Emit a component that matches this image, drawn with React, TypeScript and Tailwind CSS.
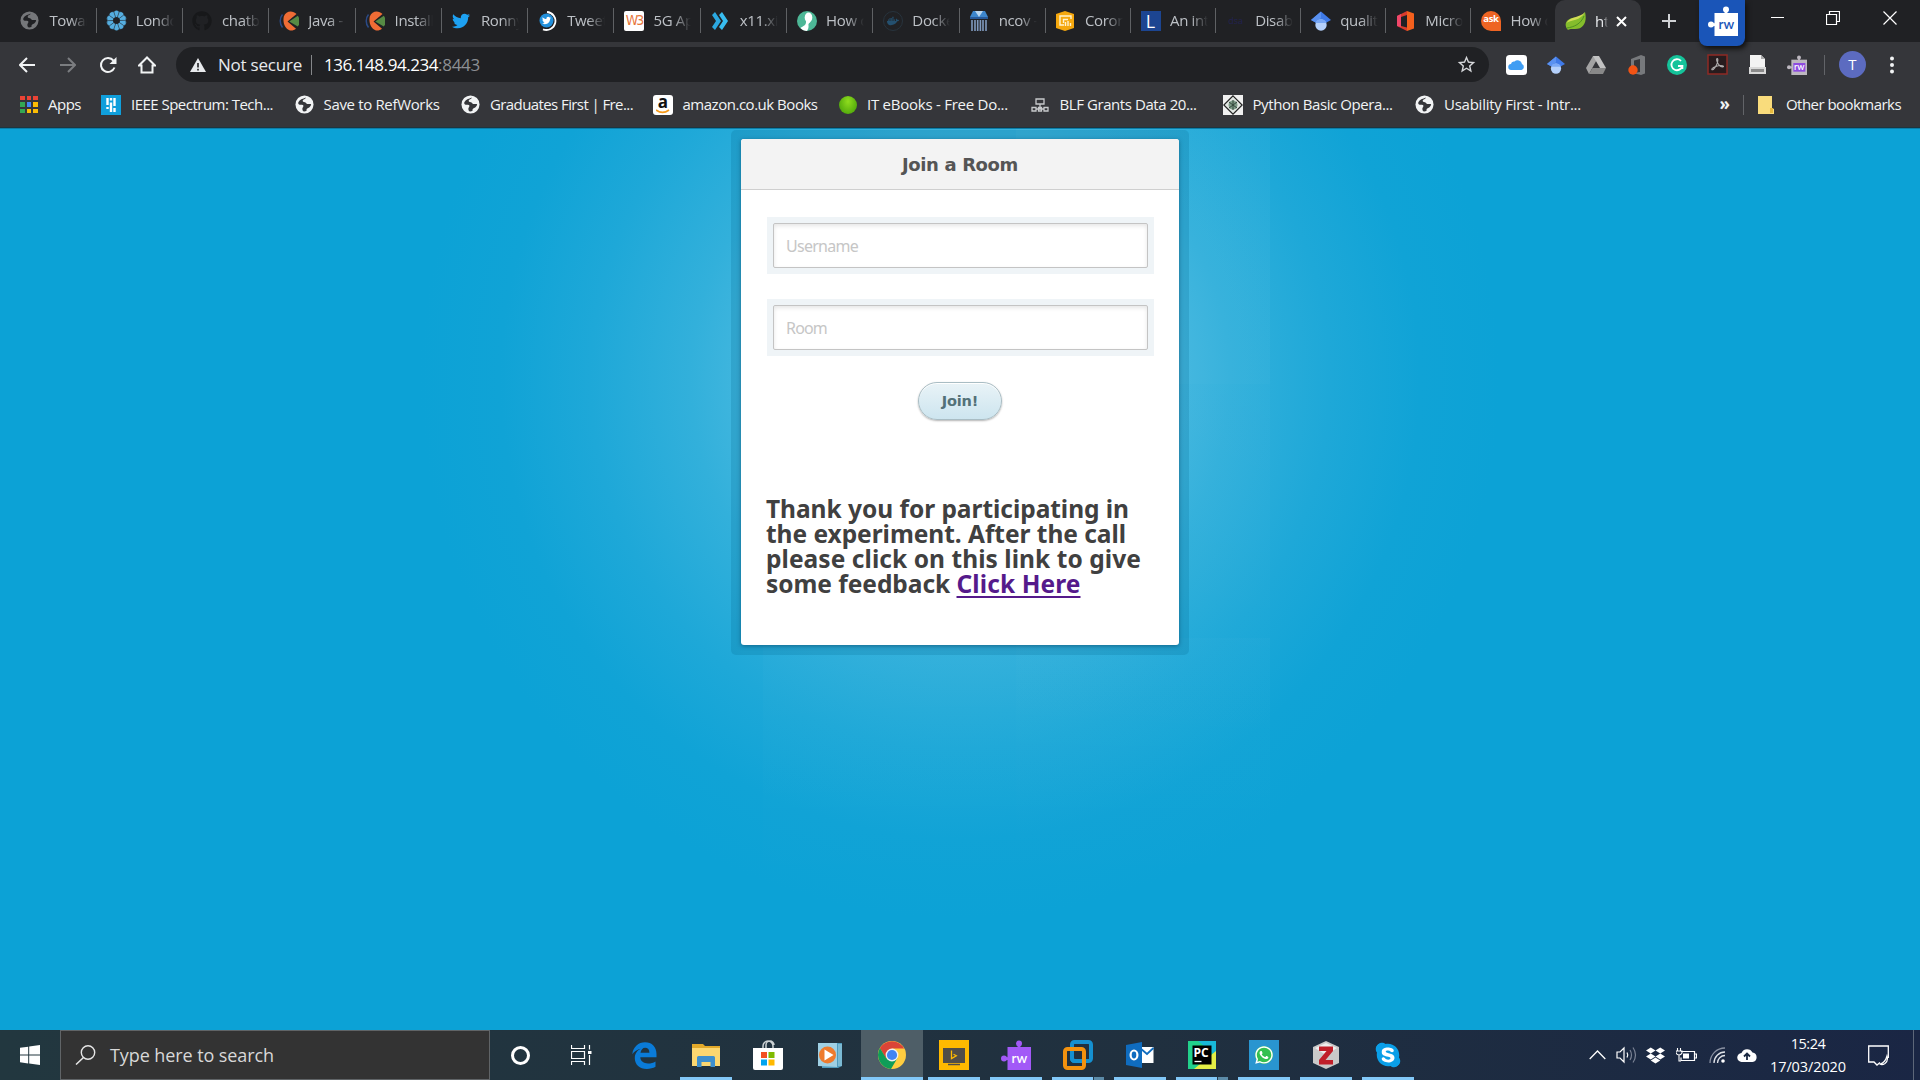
import { useLayoutEffect, useRef, useState } from "react";
import type { ReactNode } from "react";
import { FaTwitter, FaGithub, FaDocker, FaDropbox, FaWhatsapp, FaAmazon, FaSkype } from "react-icons/fa";
import { MdStarBorder } from "react-icons/md";

/* Text spaced so that it spans a given number of pixels. */
function Fit({ w, children, className = "" }: { w: number; children: string; className?: string }) {
  const ref = useRef<HTMLSpanElement>(null);
  const [gap, setGap] = useState(0);
  useLayoutEffect(() => {
    const natural = ref.current!.getBoundingClientRect().width;
    setGap((w - natural) / children.length);
  }, [w, children]);
  return (
    <span ref={ref} className={`inline-block shrink-0 whitespace-pre ${className}`} style={{ letterSpacing: gap }}>
      {children}
    </span>
  );
}

const Globe = ({ disc = "#f1f3f4", land = "#35363a" }: { disc?: string; land?: string }) => (
  <svg width="19" height="19" viewBox="0 0 20 20">
    <circle cx="10" cy="10" r="9.5" fill={disc} />
    <path d="M11.500 2.500C8 4 5 4.500 3.500 7.500 2.800 10 5 10.500 7 10.200c2-.2 2.300 1.500 1.300 2.600-1 1.200-.5 2.800.2 4.400 1.500.3 2.500 0 3.700-.6-.3-1.300.3-2.200 1.600-2.800 1.600-.8 3-2 3.200-4-1.200-.8-2-.3-3.300-.2-1.700 0-1.700-1.400-3.200-2-1.600-.5-2.600-.6-2.400-1.900.4-1.500 2.600-1 3.400-3.200z" fill={land} />
  </svg>
);

const Puzzle = ({ size, color, text, inner }: { size: number; color: string; text: string; inner?: string }) => (
  <svg width={size} height={size} viewBox="0 0 30 30">
    <circle cx="18" cy="3.600" r="3" fill={color} />
    <rect x="16.600" y="4" width="2.800" height="5" fill={color} />
    <circle cx="3" cy="18.500" r="3" fill={color} />
    <rect x="4" y="17.200" width="4" height="2.800" fill={color} />
    <rect x="6.500" y="7" width="23.500" height="23" fill={color} />
    {inner && <rect x="9.500" y="12" width="18" height="13" fill={inner} />}
    <text x="18.300" y="22.500" fontSize="13.500" fontWeight="600" textAnchor="middle" fill={text} fontFamily="Lato, sans-serif">rw</text>
  </svg>
);

const Scholar = ({ size = 20 }: { size?: number }) => (
  <svg width={size} height={size} viewBox="0 0 20 20">
    <path d="M10 .5L0 9l4.500 2.500h11L20 9z" fill="#3f7ae8" />
    <path d="M10 .5L0 9l4.500 2.500L10 7z" fill="#5a91f0" />
    <circle cx="10" cy="14" r="5.700" fill="#b4d0fb" />
    <path d="M4.500 12C6 7 14 7 15.500 12z" fill="#7aa8f5" />
  </svg>
);

const Cuneiform = () => (
  <svg width="20" height="20" viewBox="0 0 20 20">
    <path d="M3.500 3.500C.5 7 .5 13 3.500 16.500" fill="none" stroke="#2b4a86" strokeWidth="1.500" />
    <path d="M17.500 3C14-.8 7-.8 4.800 5.500 3.500 12 6 18 11 19.500c2.500.3 4.500-.5 6-1.800L8.500 10.500z" fill="#ef6c35" />
    <path d="M18.800 4.800a9.500 9.500 0 0 1 0 10.800L10.200 10.500z" fill="#568a44" />
  </svg>
);

type Tab = { title: string; icon: ReactNode };
const tabs: Tab[] = [
  { title: "Towards", icon: <Globe disc="#75777a" land="#202124" /> },
  {
    title: "London",
    icon: (
      <svg width="21" height="21" viewBox="0 0 20 20">
        {Array.from({ length: 10 }, (_, i) => (
          <path key={i} d="M9 7.200L7.200 1.800Q10-1.200 12.800 1.800L11 7.200z" fill="#55aee0" stroke="#202124" strokeWidth=".4" transform={`rotate(${i * 36} 10 10)`} />
        ))}
        <circle cx="10" cy="10" r="3.200" fill="#202124" />
      </svg>
    ),
  },
  { title: "chatbot", icon: <FaGithub size={20} color="#17181a" /> },
  { title: "Java - C", icon: <Cuneiform /> },
  { title: "Installing", icon: <Cuneiform /> },
  { title: "Ronny", icon: <FaTwitter size={18} color="#1da1f2" /> },
  {
    title: "Tweets",
    icon: (
      <span className="relative flex size-5 items-center justify-center">
        <svg width="20" height="20" viewBox="0 0 20 20" className="absolute inset-0">
          <path d="M9 1a9 9 0 1 1-4 17.300" fill="none" stroke="#fff" strokeWidth="1.800" />
          <circle cx="8.500" cy="9.500" r="7" fill="#2190dc" />
        </svg>
        <FaTwitter size={9} color="#fff" className="relative -left-[1.5px]" />
      </span>
    ),
  },
  {
    title: "5G App",
    icon: <span className="flex size-5 items-center justify-center rounded-[2px] bg-white font-['DejaVu_Sans_Condensed'] text-[14px] tracking-[-2px] text-[#e8773c]">W3</span>,
  },
  {
    title: "x11.xi",
    icon: (
      <svg width="18" height="18" viewBox="0 0 18 18">
        <path d="M1 3l3-3 6 9-6 9-3-3 4-6z" fill="#2ba8e0" />
        <path d="M8 3l3-3 6 9-6 9-3-3 4-6z" fill="#38bdf0" />
      </svg>
    ),
  },
  {
    title: "How can",
    icon: (
      <svg width="20" height="20" viewBox="0 0 20 20">
        <circle cx="10" cy="10" r="10" fill="#4db796" />
        <ellipse cx="11.500" cy="6.500" rx="3.800" ry="5" fill="#fff" />
        <path d="M9 10h4.500c0 2-2.500 2-2 4.500.3 2-.5 4-1.500 5.500-2.500 0-5-1.200-6.500-3C6 15 9.500 14.500 9 10z" fill="#fff" />
      </svg>
    ),
  },
  { title: "Docker", icon: <span className="flex size-5 items-center justify-center rounded-full border border-[#27333d]"><FaDocker size={12} color="#24506f" /></span> },
  {
    title: "ncov -",
    icon: (
      <svg width="18" height="20" viewBox="0 0 18 20">
        <path d="M3 0h12l3 6H0z" fill="#3d86cc" />
        <path d="M5 0l4 6 4-6z" fill="#b9d5ee" />
        <path d="M0 6h18v2H0z" fill="#285a9a" />
        <path d="M2 9v11M5 9v11M7.700 9v11M10.400 9v11M13 9v11M16 9v11" stroke="#7f99bd" strokeWidth="1.600" />
      </svg>
    ),
  },
  {
    title: "Corona",
    icon: (
      <svg width="20" height="20" viewBox="0 0 20 20">
        <path d="M1 3l9-3 9 3v14l-9 3-9-3z" fill="#f5a80e" />
        <path d="M16 8V5H5v9h4M8.500 12V8.500H13M10.500 11v4M13 10v5M15.500 12v3" fill="none" stroke="#fff3d0" strokeWidth="1.400" />
      </svg>
    ),
  },
  { title: "An intro", icon: <span className="flex size-5 items-center justify-center bg-[#1c4591] font-['Open_Sans'] text-[18px] leading-none text-white">L</span> },
  { title: "Disabil", icon: <span className="flex size-5 items-center justify-center text-[9px] text-[#222250]">dsa</span> },
  { title: "quality", icon: <Scholar size={20} /> },
  {
    title: "Microso",
    icon: (
      <svg width="17" height="20" viewBox="0 0 17 20">
        <path d="M0 5l10-5v4L4 6v9l6 1.500V20L0 15z" fill="#d83b2c" />
        <path d="M0 5l4-2v13l-4-1z" fill="#f0476a" />
        <path d="M10 0l7 2.500v15L10 20z" fill="#f4601d" />
      </svg>
    ),
  },
  {
    title: "How do",
    icon: (
      <span className="flex size-5 items-center justify-center rounded-full rounded-br-[3px] bg-[#ee6423] pb-[2px] font-['Open_Sans'] text-[9.5px] font-bold tracking-[-0.3px] text-white">ask</span>
    ),
  },
];

function TabStrip() {
  return (
    <div className="flex h-[42px] bg-[#202124]">
      <div className="flex w-[1555px] pl-[10.4px]">
        {tabs.map((t, i) => (
          <div key={i} className={`flex h-[41px] shrink-0 items-center ${i < 12 ? "w-[86.3px]" : "w-[85.1px]"}`}>
            <div className="flex w-[39px] shrink-0 justify-center">{t.icon}</div>
            <div className="w-[38px] overflow-hidden mask-r-from-55% mask-r-to-100% text-[15px] tracking-[-0.35px] whitespace-pre text-[#bdc1c6]">{t.title}</div>
            <div className={i === tabs.length - 1 ? "hidden" : "ml-auto h-[25px] w-px bg-[#5f6164]"} />
          </div>
        ))}
      </div>
      <div className="flex w-[86px] items-center rounded-t-[10px] bg-[#35363a] pl-[10px]">
        <svg width="21" height="20" viewBox="0 0 21 20">
          <path d="M20 1c2 8 0 17-10 17-3 0-5-.5-7 1C-1 15 0 9 7 7c5-1 10-1 13-6z" fill="#84bd2c" />
          <path d="M20 1C15 7 5 5 1.500 12 5 9 16 10 20 1z" fill="#d2dd55" />
          <path d="M2 17c7-1 14-4 17-12" stroke="#4e9121" fill="none" />
        </svg>
        <div className="ml-[9px] w-[13px] overflow-hidden mask-r-from-60% mask-r-to-100% text-[15px] tracking-[-0.3px] text-[#e8eaed]">http</div>
        <svg width="11" height="11" viewBox="0 0 11 11" className="ml-[8px]"><path d="M1 1l9 9M10 1l-9 9" stroke="#fff" strokeWidth="2" /></svg>
      </div>
      <div className="flex w-[58px] items-center justify-center pr-[3px]">
        <svg width="16" height="16" viewBox="0 0 16 16"><path d="M8 1v14M1 8h14" stroke="#d0d2d5" strokeWidth="2" /></svg>
      </div>
      <div className="relative z-10 flex h-[46px] w-[46px] items-center justify-center rounded-b-[8px] bg-[#1a55b8] shadow-[2px_3px_5px_#111]">
        <div className="relative -top-[2px] left-[1px]"><Puzzle size={30} color="#fff" text="#1a55b8" /></div>
      </div>
      <div className="flex h-[36px] flex-1 items-center pl-[26px] text-white">
        <svg width="13" height="14" viewBox="0 0 13 14"><path d="M0 6.500h13" stroke="#fff" /></svg>
        <svg width="14" height="14" viewBox="0 0 14 14" className="ml-[42px]"><path d="M.5 3.500h10v10H.5zM3.500 3.500v-3h10v10h-3" fill="none" stroke="#fff" strokeWidth="1.200" /></svg>
        <svg width="14" height="14" viewBox="0 0 14 14" className="ml-[43px]"><path d="M.5.5l13 13M13.500.5l-13 13" stroke="#fff" strokeWidth="1.200" /></svg>
      </div>
    </div>
  );
}

function Toolbar() {
  const ext: ReactNode[] = [
    <svg width="21" height="20" viewBox="0 0 21 20"><rect width="21" height="20" rx="3.500" fill="#fff" /><path d="M5.500 15a3 3 0 0 1-.5-6 3 3 0 0 1 3.500-2.500A4.500 4.500 0 0 1 16 9a3.200 3.200 0 0 1-.5 6z" fill="#3f9df3" /></svg>,
    <Scholar size={18} />,
    <svg width="20" height="18" viewBox="0 0 20 18"><path d="M7 0h6l-4 7-6 11-3-6z" fill="#a3a3a3" /><path d="M7 0h6l7 12h-6z" fill="#c2c2c2" /><path d="M6.500 12H20l-3 6H3z" fill="#888" /></svg>,
    <svg width="18" height="20" viewBox="0 0 18 20"><path d="M3 4l10-4 4 1.500v17L13 20 5 18l7-1V4L6 5.500V15l-3 1z" fill="#77797c" /><circle cx="5" cy="15" r="4.700" fill="#f25314" /></svg>,
    <svg width="20" height="20" viewBox="0 0 20 20"><circle cx="10" cy="10" r="10" fill="#15c39a" /><path d="M14 6a5.500 5.500 0 1 0 1.300 5H11M15.400 11v3" fill="none" stroke="#fff" strokeWidth="1.800" /></svg>,
    <svg width="21" height="21" viewBox="0 0 21 21"><rect x="1" y="1" width="19" height="19" fill="#271c1e" stroke="#8e2a25" strokeWidth="1.500" /><path d="M10.300 4.500c-1.300 0-.6 3 1 5.500 1.300 2 3.500 3.200 5 2.800 1-.5-1.500-1.700-5-1-3.500.6-7 2.700-6.500 3.800.9.900 3-1.400 4.700-4.700 1.500-3 1.700-6.400.8-6.400z" fill="none" stroke="#b0adad" strokeWidth="1.100" /></svg>,
    <svg width="17" height="19" viewBox="0 0 17 19"><path d="M1 0h11l4 4v10H1z" fill="#f3f3f3" /><path d="M12 0v4h4z" fill="#aaa" /><path d="M0 12h17v7H0z" fill="#d9d9d9" /><path d="M2 14h13v3H2z" fill="#8a8a8a" /></svg>,
    <Puzzle size={20} color="#bdb8c0" text="#fff" inner="#8e4be0" />,
  ];
  return (
    <div className="flex h-[45px] items-center bg-[#35363a]">
      <div className="flex w-[176px] shrink-0 items-center pl-[19px]">
        <svg width="16" height="16" viewBox="0 0 16 16"><path d="M16 8H1.500M8 1L1 8l7 7" fill="none" stroke="#f1f3f4" strokeWidth="2" /></svg>
        <svg width="16" height="16" viewBox="0 0 16 16" className="ml-[25px]"><path d="M0 8h14.500M8 1l7 7-7 7" fill="none" stroke="#7b7d80" strokeWidth="2" /></svg>
        <svg width="18" height="18" viewBox="0 0 18 18" className="ml-[23px]"><path d="M15.500 11.500a7 7 0 1 1-1-6.800" fill="none" stroke="#f1f3f4" strokeWidth="2" /><path d="M17.500 1v7h-7z" fill="#f1f3f4" /></svg>
        <svg width="18" height="18" viewBox="0 0 18 18" className="ml-[21px]"><path d="M1 9.500L9 1.500l8 8h-2.500v7h-11v-7z" fill="none" stroke="#f1f3f4" strokeWidth="2" /></svg>
      </div>
      <div className="flex h-[35px] w-[1313px] shrink-0 items-center rounded-full bg-[#202124] text-[17px]">
        <svg width="16" height="14" viewBox="0 0 16 14" className="ml-[14px]"><path d="M8 0l8 14H0z" fill="#e8eaed" /><path d="M8 5v4.500M8 10.800v1.700" stroke="#202124" strokeWidth="1.600" /></svg>
        <Fit w={84} className="ml-[12px] text-[#e8eaed]">Not secure</Fit>
        <div className="mr-[12px] ml-[9px] h-[20px] w-px bg-[#85878a]" />
        <Fit w={114} className="text-white">136.148.94.234</Fit>
        <Fit w={42} className="text-[#8c8f93]">:8443</Fit>
        <MdStarBorder size={21} color="#d5d7da" className="mr-[12px] ml-auto" />
      </div>
      <div className="flex items-center pl-[7px]">
        {ext.map((e, i) => (
          <div key={i} className="flex w-[40.2px] justify-center">{e}</div>
        ))}
      </div>
      <div className="ml-[6.5px] h-[20px] w-px bg-[#626468]" />
      <div className="ml-[14px] flex size-[27px] items-center justify-center rounded-full bg-[#5c6bc0] text-[15px] text-white">T</div>
      <svg width="4" height="18" viewBox="0 0 4 18" className="ml-[24px]"><circle cx="2" cy="2.500" r="2" fill="#f1f3f4" /><circle cx="2" cy="9" r="2" fill="#f1f3f4" /><circle cx="2" cy="15.500" r="2" fill="#f1f3f4" /></svg>
    </div>
  );
}

function Bookmark({ icon, text, w, start, slot }: { icon: ReactNode; text: string; w: number; start: string; slot: string }) {
  return (
    <div className={`flex shrink-0 items-center ${slot}`}>
      <div className={`flex shrink-0 items-center ${start}`}>{icon}</div>
      <Fit w={w}>{text}</Fit>
    </div>
  );
}

function Bookmarks() {
  const dots = ["#ea4335", "#ea4335", "#ea4335", "#34a853", "#4285f4", "#fbbc05", "#34a853", "#fbbc05", "#fbbc05"];
  return (
    <div className="flex h-[40px] items-center bg-[#35363a] pb-[5px] pl-[20px] text-[15px] text-[#f1f3f4]">
      <Bookmark slot="w-[81px]" start="w-[28px]" w={33} text="Apps" icon={
        <div className="grid grid-cols-3 gap-x-[2px] gap-y-[2px]">
          {dots.map((c, i) => <div key={i} className="h-[4.5px] w-[4.5px]" style={{ background: c }} />)}
        </div>} />
      <Bookmark slot="w-[193.500px]" start="w-[30px]" w={142} text="IEEE Spectrum: Tech..." icon={
        <svg width="20" height="20" viewBox="0 0 20 20"><rect width="20" height="20" fill="#109fdb" /><path d="M6.500 3v7M6.500 12v2M10 3v2.500M10 7.500V17M13.500 3v8M13.500 13v4" stroke="#fff" strokeWidth="2.400" /></svg>} />
      <Bookmark slot="w-[166.500px]" start="w-[29px]" w={116} text="Save to RefWorks" icon={<Globe />} />
      <Bookmark slot="w-[192px]" start="w-[29px]" w={143} text="Graduates First | Fre..." icon={<Globe />} />
      <Bookmark slot="w-[185.500px]" start="w-[29.500px]" w={135} text="amazon.co.uk Books" icon={
        <div className="relative flex size-5 items-center justify-center rounded-[3px] bg-white font-['Open_Sans'] text-[17px] leading-none font-bold text-[#111]"><span className="relative -top-[3px]">a</span><svg width="14" height="5" viewBox="0 0 14 5" className="absolute bottom-[1px] left-[3px]"><path d="M0 1c4 3 9 3 13 0" fill="none" stroke="#f79b1c" strokeWidth="1.600" /></svg></div>} />
      <Bookmark slot="w-[192px]" start="w-[28.500px]" w={141} text="IT eBooks - Free Do..." icon={<div className="size-[18px] rounded-full bg-radial-[at_50%_30%] from-[#8fdc1e] to-[#3f9a06]" />} />
      <Bookmark slot="w-[192px]" start="w-[29px]" w={137} text="BLF Grants Data 20..." icon={
        <svg width="18" height="14" viewBox="0 0 18 14"><path d="M5 1h8v5H5zM1 9.500h4v3.500H1zM13 9.500h4v3.500h-4zM7.500 9.500h3v3.500h-3zM9 6v3.500M5 11h8" fill="none" stroke="#c8cacc" strokeWidth="1.300" /></svg>} />
      <Bookmark slot="w-[192.500px]" start="w-[30px]" w={140} text="Python Basic Opera..." icon={
        <svg width="20" height="20" viewBox="0 0 20 20"><rect width="20" height="20" fill="#f0f0f0" /><path d="M10 .8L19.200 10 10 19.200.8 10z" fill="#e3e8e4" stroke="#222" strokeWidth="1.200" /><circle cx="10" cy="10" r="4.500" fill="#7d9b88" /><path d="M6 7l8 6M6 13l8-6M10 5v10" stroke="#33463a" /></svg>} />
      <Bookmark slot="w-[304.500px]" start="w-[29px]" w={137} text="Usability First - Intr..." icon={<Globe />} />
      <span className="w-[23px] pb-[3px] text-[17px] leading-none font-bold">»</span>
      <div className="mr-[14px] h-[20px] w-px bg-[#626468]" />
      <Bookmark slot="" start="w-[28.500px]" w={115} text="Other bookmarks" icon={
        <svg width="16" height="18" viewBox="0 0 16 18"><path d="M0 0h14v12l2 1v5H0z" fill="#f9dc7c" /><path d="M12 12h3v5h-3z" fill="#e6b93e" /></svg>} />
    </div>
  );
}

function Field({ label, w }: { label: string; w: number }) {
  return (
    <div className="h-[57px] w-[387px] bg-[#eff4f7] p-[6px]">
      <div className="flex h-[45px] items-center rounded-[2px] border border-[#c4c4c4] bg-white pt-[1px] pl-[12px] font-['Noto_Sans','Open_Sans',sans-serif] text-[16px] text-[#c6c6c6] shadow-[inset_0_2px_4px_rgba(0,0,0,0.10)]">
        <Fit w={w}>{label}</Fit>
      </div>
    </div>
  );
}

function Page() {
  return (
    <main className="flex h-[902px] justify-center border-t border-[#0b7fa9] bg-[#0ca2d6] bg-[linear-gradient(rgba(255,255,255,0.03),rgba(255,255,255,0.03)),linear-gradient(rgba(255,255,255,0.02),rgba(255,255,255,0)),linear-gradient(rgba(255,255,255,0.015),rgba(255,255,255,0)),radial-gradient(circle_at_960px_250px,#55c0e4_0px,#48b9e0_190px,#32b0db_270px,#1ea8d8_370px,#10a3d6_460px,#0ca2d6_540px)] bg-[size:254px_255px,254px_510px,507px_260px,auto] bg-[position:1016px_0px,1016px_255px,763px_509px,0_0] bg-no-repeat pt-[1px] font-['DejaVu_Sans',sans-serif]">
      <div className="h-[525px] w-[458px] rounded-[5px] bg-[rgba(0,100,140,0.2)] px-[10px] pt-[9px]">
        <section className="h-[506px] rounded-[3px] bg-white shadow-[0_1px_4px_rgba(0,50,80,0.5)]">
          <h1 className="flex h-[51px] items-center justify-center rounded-t-[3px] border-b border-[#cfcfcf] bg-[#f3f3f3] text-[18px] font-bold text-[#555]">
            <Fit w={116}>Join a Room</Fit>
          </h1>
          <div className="flex flex-col pt-[27px] pl-[26px]">
            <Field label="Username" w={72} />
            <div className="h-[25px]" />
            <Field label="Room" w={41} />
          </div>
          <div className="flex justify-center pt-[26px]">
            <button className="h-[38px] w-[84px] rounded-full border border-[#a9bdc4] bg-linear-to-b from-[#e9f3f7] to-[#cde5ef] pt-[2px] text-[14.5px] font-bold text-[#537178] shadow-[0_1px_2px_rgba(0,0,0,0.3),inset_0_1px_0_#fff]">
              <Fit w={36.5}>Join!</Fit>
            </button>
          </div>
          <h2 className="flex flex-col items-start pt-[76px] pl-[25px] font-['Noto_Sans','Open_Sans',sans-serif] text-[24.5px] leading-[25px] font-bold text-[#404040]">
            <Fit w={363}>Thank you for participating in</Fit>
            <Fit w={360}>the experiment. After the call</Fit>
            <Fit w={375}>please click on this link to give</Fit>
            <span className="flex">
              <Fit w={190.5}>{"some feedback "}</Fit>
              <Fit w={124} className="text-[#551a8b] underline decoration-2 underline-offset-[3px]">Click Here</Fit>
            </span>
          </h2>
        </section>
      </div>
    </main>
  );
}

type App = { icon: ReactNode; open?: boolean; stacked?: boolean; active?: boolean };
const apps: App[] = [
  {
    icon: <svg width="25" height="27" viewBox="0 0 25 27"><path d="M.3 12.200C1.200 5 6.500.3 13 .3 20 .3 24.500 5 24.500 12v3.300H8.300c.2 4 3.500 6.200 7.700 6.200 2.900 0 5.300-.8 7.500-2.100v5.400c-2.400 1.400-5.400 2.100-8.700 2.100-7.200 0-12-4.300-12-10.700 0-4.300 2.300-7.700 6-9.400C5.300 7.700 2.200 9.500.3 12.200zM8.500 10.800h8.900c0-3.300-1.500-5-4.300-5-2.400 0-4.100 2-4.600 5z" fill="#0a7bd8" /></svg>,
  },
  {
    open: true,
    icon: <svg width="28" height="24" viewBox="0 0 28 24"><path d="M0 1h11l2 2h15v19H0z" fill="#e2a92a" /><path d="M0 5h28v18H0z" fill="#fcd770" /><path d="M5 24V14.500q0-1.500 1.500-1.500h15q1.500 0 1.500 1.500V24h-4.500v-5h-9v5z" fill="#3e8fcd" /></svg>,
  },
  {
    icon: <svg width="30" height="30" viewBox="0 0 30 30"><path d="M10 9V6a5 5 0 0 1 10 0v3M13 9V5a4 4 0 0 1 8 0" fill="none" stroke="#ccd2d4" strokeWidth="1.500" /><path d="M0 8h30v20q0 2-2 2H2q-2 0-2-2z" fill="#fff" /><path d="M8 12h6v6H8z" fill="#f25022" /><path d="M15.500 12h6v6h-6z" fill="#7fba00" /><path d="M8 19.500h6v6H8z" fill="#00a4ef" /><path d="M15.500 19.500h6v6h-6z" fill="#ffb900" /></svg>,
  },
  {
    icon: <svg width="26" height="26" viewBox="0 0 26 26"><path d="M5 1h20v23l-4 2H5z" fill="#4f9bbd" /><path d="M1 1h19v24l-19-1z" fill="#9fd0e4" /><path d="M22 2v22M24 2v22" stroke="#a8d8ea" /><circle cx="10.500" cy="13" r="8.500" fill="#ee7b2e" /><path d="M7.500 7.500l9 5.500-9 5.500z" fill="#fff" /></svg>,
  },
  {
    open: true, active: true,
    icon: <svg width="28" height="28" viewBox="0 0 28 28"><circle cx="14" cy="14" r="14" fill="#ffcd40" /><path d="M1.900 7A14 14 0 0 1 26.100 7.500H14L8 17.500z" fill="#db4437" /><path d="M1.900 7A14 14 0 0 0 13 28l6.500-11L14 20l-6-3z" fill="#0f9d58" /><circle cx="14" cy="14" r="6.400" fill="#f1f1f1" /><circle cx="14" cy="14" r="5.100" fill="#4285f4" /></svg>,
  },
  {
    open: true,
    icon: <svg width="30" height="30" viewBox="0 0 30 30"><rect width="30" height="30" fill="#ffb900" /><path d="M4 8h22v15H4z" fill="#514d48" /><path d="M9 24.500h12" stroke="#514d48" strokeWidth="1.500" /><path d="M12.500 10.500v8l4.800-2.800-2.800-1.500" fill="none" stroke="#ffb900" strokeWidth="1.300" /></svg>,
  },
  { open: true, icon: <Puzzle size={30} color="#a259f7" text="#fff" /> },
  {
    open: true, stacked: true,
    icon: <svg width="30" height="30" viewBox="0 0 30 30"><rect x="9" y="2" width="19" height="19" rx="2.500" fill="none" stroke="#1590d0" strokeWidth="4" /><rect x="2" y="9" width="19" height="19" rx="2.500" fill="none" stroke="#f3920f" strokeWidth="4" /><path d="M9 11v7q0 3 3 3h6" fill="none" stroke="#1590d0" strokeWidth="4" /></svg>,
  },
  {
    open: true,
    icon: <svg width="28" height="26" viewBox="0 0 28 26"><path d="M14 5h13.500v16H14z" fill="#fff" /><path d="M14 6l7 6 6.500-6" fill="none" stroke="#0f6cbf" strokeWidth="1.800" /><path d="M0 3l16-3v26L0 23z" fill="#0f6cbf" /><ellipse cx="8" cy="13" rx="3.400" ry="4.500" fill="none" stroke="#fff" strokeWidth="2.200" /></svg>,
  },
  {
    open: true, stacked: true,
    icon: <svg width="28" height="28" viewBox="0 0 28 28"><path d="M0 0h28v28H0z" fill="#22d18b" /><path d="M10 0h18v15z" fill="#18b8d8" /><path d="M28 10v18H6z" fill="#e5ee45" /><rect x="4.500" y="4.500" width="19" height="19" fill="#000" /><text x="5.500" y="15.500" fontSize="12" fontWeight="bold" fill="#fff" fontFamily="Open Sans, sans-serif">PC</text><path d="M6.500 20.500h7" stroke="#fff" strokeWidth="1.300" /></svg>,
  },
  { open: true, icon: <span className="flex size-[30px] items-center justify-center bg-[#2995d0]"><span className="flex size-[18px] items-center justify-center rounded-full bg-[#35c04f]"><FaWhatsapp size={20} color="#fff" className="shrink-0" /></span></span> },
  {
    open: true,
    icon: <svg width="26" height="28" viewBox="0 0 26 28"><path d="M13 0l13 6v16l-13 6L0 22V6z" fill="#c9c9c9" /><path d="M13 2l11 5-11 7L2 7z" fill="#eee" /><path d="M6 5.500h14v4.500l-7.500 9H20v4.500H6V19l7.500-9H6z" fill="#c01f2a" /></svg>,
  },
  { open: true, icon: <FaSkype size={28} color="#0a9fe8" className="rounded-[12px] bg-[radial-gradient(circle,#fff_45%,transparent_50%)]" /> },
];

function Taskbar() {
  return (
    <footer className="flex h-[50px] bg-linear-to-r from-[#22373f] via-[#20303f] via-60% to-[#1a2644] text-white">
      <div className="flex w-[60px] items-center justify-center">
        <svg width="20" height="20" viewBox="0 0 20 20"><path d="M0 2.800l8.200-1.100v7.800H0zM9.200 1.500L20 0v9.500H9.200zM0 10.500h8.200v7.900L0 17.300zM9.200 10.500H20V20L9.200 18.500z" fill="#fff" /></svg>
      </div>
      <div className="flex w-[430px] items-center border border-[#606467] bg-[#333] pl-[14px]">
        <svg width="21" height="20" viewBox="0 0 21 20"><circle cx="13" cy="7.500" r="6.700" fill="none" stroke="#e6e6e6" strokeWidth="1.400" /><path d="M8.500 12.500L1 19.500" stroke="#e6e6e6" strokeWidth="1.500" /></svg>
        <Fit w={164} className="ml-[14px] text-[18px] text-[#d8d8d8]">Type here to search</Fit>
      </div>
      <div className="flex w-[60px] items-center justify-center"><div className="size-[19px] rounded-full border-[3px] border-white" /></div>
      <div className="flex w-[62px] items-center justify-center">
        <svg width="21" height="20" viewBox="0 0 21 20"><path d="M.5 0v3.500h13V0M.5 20v-3.500h13V20M.5 6.500h13v7H.5zM18.500 0v4.500M18.500 10v10" fill="none" stroke="#fff" strokeWidth="1.200" /><path d="M17 6h3.500v3H17z" fill="#fff" /></svg>
      </div>
      {apps.map((a, i) => (
        <div key={i} className={`flex w-[62px] shrink-0 flex-col items-center ${i === 0 ? "ml-px" : ""} ${a.active ? "px-0" : "px-[5px]"}`}>
          <div className={`flex h-[47px] w-full items-center justify-center pt-[3px] ${a.active ? "bg-[#4e5e67]" : ""}`}>{a.icon}</div>
          <div className={a.open ? "flex h-[3px] w-full bg-[#82c8f8]" : "hidden"}>
            {a.stacked && <div className="ml-auto w-[11px] border-l border-[#26394a] bg-[#5c8ba8]" />}
          </div>
        </div>
      ))}
      <div className="ml-auto flex items-center">
        <svg width="17" height="10" viewBox="0 0 17 10"><path d="M.7 9l7.800-8 7.800 8" fill="none" stroke="#fff" strokeWidth="1.300" /></svg>
        <svg width="21" height="18" viewBox="0 0 21 18" className="ml-[10px]"><path d="M1 6h3l4-4v14l-4-4H1z" fill="none" stroke="#fff" strokeWidth="1.200" /><path d="M11 6.500q1.500 2.500 0 5" fill="none" stroke="#fff" strokeWidth="1.200" /><path d="M14 4q3 5 0 10M17 1.500q5 7.500 0 15" fill="none" stroke="#7a8294" strokeWidth="1.200" /></svg>
        <FaDropbox size={19} className="ml-[9px]" />
        <svg width="21" height="14" viewBox="0 0 21 14" className="ml-[11px]"><path d="M5 3.500h13.500v9H5v-3M19 6h1.500v4H19" fill="none" stroke="#fff" strokeWidth="1.200" /><path d="M7 5.500h6v5H7z" fill="#fff" /><path d="M1.500 0v3M4.500 0v3M0 3h6v2q-1 2-3 2T0 5zM3 7v6h2" fill="none" stroke="#fff" strokeWidth="1.100" /></svg>
        <svg width="16" height="16" viewBox="0 0 16 16" className="ml-[12px]"><path d="M1 16A15 15 0 0 1 16 1" fill="none" stroke="#8a91a2" strokeWidth="1.300" /><path d="M5 16A11 11 0 0 1 16 5M8.500 16A7.500 7.500 0 0 1 16 8.500" fill="none" stroke="#dfe2e8" strokeWidth="1.300" /><circle cx="14" cy="14" r="1.800" fill="#fff" /></svg>
        <svg width="20" height="14" viewBox="0 0 20 14" className="ml-[12px]"><path d="M5 14a4.500 4.500 0 0 1-.5-9A6 6 0 0 1 15.500 4.500 4.800 4.800 0 0 1 15.500 14z" fill="#fff" /><path d="M10 12V6M7 8.500L10 5.500l3 3" fill="none" stroke="#1b2942" strokeWidth="1.800" /></svg>
        <div className="ml-[13px] flex w-[76px] flex-col items-center text-[14.5px] leading-[23px]">
          <Fit w={34.5}>15:24</Fit>
          <Fit w={76}>17/03/2020</Fit>
        </div>
        <svg width="21" height="21" viewBox="0 0 21 21" className="ml-[22px]"><path d="M12 17.500l-3 2.500-3-3H.7V1h19.600v12" fill="none" stroke="#fff" strokeWidth="1.300" /><path d="M19 11q1.500 5-2 7.500-3 2-5 .5 5-1 7-8z" fill="none" stroke="#fff" strokeWidth="1.200" /></svg>
        <div className="mr-[6px] ml-[24px] h-[50px] w-px bg-[#5d6779]" />
      </div>
    </footer>
  );
}

export default function App() {
  return (
    <div className="flex h-[1080px] w-[1920px] flex-col overflow-hidden font-['Open_Sans','Noto_Sans',sans-serif]">
      <TabStrip />
      <Toolbar />
      <Bookmarks />
      <div className="h-px bg-[#1d3540]" />
      <Page />
      <Taskbar />
    </div>
  );
}
